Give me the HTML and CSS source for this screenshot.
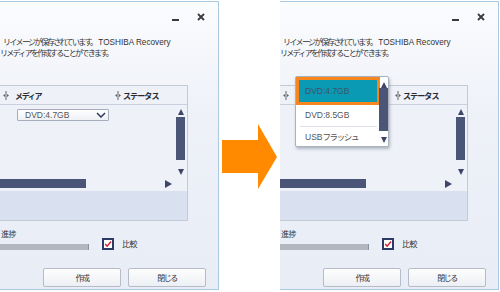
FILE: index.html
```html
<!DOCTYPE html>
<html lang="ja">
<head>
    <meta charset="UTF-8">
    <meta name="viewport" content="width=device-width, initial-scale=1.0">
    <title>リカバリメディア作成</title>
    <link rel="stylesheet" href="styles.css">
</head>
<body>
    <div class="stage">

        <!-- before: the media drop-down is closed -->
        <div class="shot">
            <div class="titlebar">
                <span class="min"></span>
                <svg class="close" width="8" height="8" viewBox="0 0 8 8"><path d="M1 1L7 7M7 1L1 7" stroke="#3a3a3a" stroke-width="1.8"/></svg>
            </div>
            <p class="intro">
                <span class="line first"><span class="ja">リイメージが保存されています。</span><span class="en">TOSHIBA Recovery</span></span>
                <span class="line"><span class="ja">リメディアを作成することができます。</span></span>
            </p>
            <div class="table">
                <div class="thead">
                    <div class="col col-media">
                        <svg class="sep" width="6" height="9" viewBox="0 0 6 9"><path d="M3 0V9" stroke="#666"/><path d="M0 4.5L2 3V6Z M6 4.5L4 3V6Z" fill="#666"/></svg>
                        <span class="head ja">メディア</span>
                    </div>
                    <div class="col">
                        <svg class="sep" width="6" height="9" viewBox="0 0 6 9"><path d="M3 0V9" stroke="#666"/><path d="M0 4.5L2 3V6Z M6 4.5L4 3V6Z" fill="#666"/></svg>
                        <span class="head ja status">ステータス</span>
                    </div>
                </div>
                <div class="tbody">
                    <div class="rows">
                        <div class="select">
                            <span>DVD:4.7GB</span>
                            <svg width="10" height="6" viewBox="0 0 10 6"><path d="M1 1L5 5L9 1" fill="none" stroke="#2f3b63" stroke-width="1.5"/></svg>
                        </div>
                    </div>
                    <div class="vscroll">
                        <span class="tri-up"></span>
                        <span class="thumb"></span>
                        <span class="tri-down"></span>
                    </div>
                </div>
                <div class="hscroll">
                    <span class="hthumb"></span>
                    <span class="tri-right"></span>
                </div>
                <div class="detail"></div>
            </div>
            <div class="progress">
                <div class="progress-col">
                    <div class="label ja">進捗</div>
                    <div class="bar"></div>
                </div>
                <span class="box"><svg width="10" height="10" viewBox="0 0 10 10"><path d="M1.5 5L4 7.8L8.8 1.8" fill="none" stroke="#d0202a" stroke-width="1.8"/></svg></span>
                <span class="check-label ja">比較</span>
            </div>
            <div class="actions">
                <button class="ja">作成</button>
                <button class="ja">閉じる</button>
            </div>
        </div>

        <div class="gap">
            <svg width="60" height="66" viewBox="0 0 60 66"><path d="M3 16H39V0L58 33L39 65V49H3Z" fill="#ff8a00"/></svg>
        </div>

        <!-- after: the list is open with the first entry picked -->
        <div class="shot shot-open">
            <div class="titlebar">
                <span class="min"></span>
                <svg class="close" width="8" height="8" viewBox="0 0 8 8"><path d="M1 1L7 7M7 1L1 7" stroke="#3a3a3a" stroke-width="1.8"/></svg>
            </div>
            <p class="intro">
                <span class="line first"><span class="ja">リイメージが保存されています。</span><span class="en">TOSHIBA Recovery</span></span>
                <span class="line"><span class="ja">リメディアを作成することができます。</span></span>
            </p>
            <div class="table">
                <div class="thead">
                    <div class="col col-media">
                        <svg class="sep" width="6" height="9" viewBox="0 0 6 9"><path d="M3 0V9" stroke="#666"/><path d="M0 4.5L2 3V6Z M6 4.5L4 3V6Z" fill="#666"/></svg>
                    </div>
                    <div class="col">
                        <svg class="sep" width="6" height="9" viewBox="0 0 6 9"><path d="M3 0V9" stroke="#666"/><path d="M0 4.5L2 3V6Z M6 4.5L4 3V6Z" fill="#666"/></svg>
                        <span class="head ja status">ステータス</span>
                    </div>
                </div>
                <div class="tbody">
                    <div class="rows"></div>
                    <div class="vscroll">
                        <span class="tri-up"></span>
                        <span class="thumb"></span>
                        <span class="tri-down"></span>
                    </div>
                </div>
                <div class="hscroll">
                    <span class="hthumb"></span>
                    <span class="tri-right"></span>
                </div>
                <div class="detail"></div>
            </div>
            <div class="progress">
                <div class="progress-col">
                    <div class="label ja">進捗</div>
                    <div class="bar"></div>
                </div>
                <span class="box"><svg width="10" height="10" viewBox="0 0 10 10"><path d="M1.5 5L4 7.8L8.8 1.8" fill="none" stroke="#d0202a" stroke-width="1.8"/></svg></span>
                <span class="check-label ja">比較</span>
            </div>
            <div class="actions">
                <button class="ja">作成</button>
                <button class="ja">閉じる</button>
            </div>

            <div class="popup">
                <ul class="options">
                    <li class="picked">DVD:4.7GB</li>
                    <li class="split">DVD:8.5GB</li>
                    <li>USB<span class="ja">フラッシュ</span></li>
                </ul>
                <div class="pscroll">
                    <span class="tri-up"></span>
                    <span class="pthumb"></span>
                    <span class="tri-down"></span>
                </div>
            </div>
        </div>

    </div>
</body>
</html>
```

FILE: styles.css
```css
body {
    margin: 0;
    background: white;
}

.stage {
    display: flex;
    align-items: flex-start;
    width: 500px;
    height: 292px;
    overflow: hidden;
}

/* one window crop */
.shot {
    position: relative;
    width: 219px;
    height: 289px;
    margin-top: 1px;
    box-sizing: border-box;
    border: 1px solid #a9cbe2;
    border-left: none;
    background: linear-gradient(#fbfcfe, #eef1f8 40%, #e9edf6);
    font-family: "Liberation Sans", "Noto Sans CJK JP", sans-serif;
    font-size: 8px;
    color: #333;
    overflow: hidden;
}

.ja {
    font-family: "Noto Sans CJK JP", sans-serif;
    letter-spacing: -1.5px;
}

.titlebar {
    height: 30px;
    display: flex;
    justify-content: flex-end;
    align-items: center;
    padding-right: 13px;
}

.min {
    width: 7px;
    height: 2px;
    background: #3a3a3a;
    margin-right: 18px;
    margin-top: 6px;
}

.close {
    display: block;
    margin-top: -1px;
}

.intro {
    margin: 0;
    padding-top: 5px;
    line-height: 10px;
}

.line {
    display: block;
    white-space: nowrap;
}

.line .ja {
    letter-spacing: -1.7px;
}

.first {
    margin-left: 3px;
}

.en {
    margin-left: 2px;
    font-size: 8.2px;
}

/* media list */
.table {
    margin-top: 26px;
    width: 188px;
    box-sizing: border-box;
    border: 1px solid #c3cad7;
    border-left: none;
    background: #eef1f8;
}

.thead {
    height: 19px;
    box-sizing: border-box;
    border-bottom: 1px solid #c9d0db;
    display: flex;
    align-items: center;
}

.col {
    display: flex;
    align-items: center;
}

.col-media {
    width: 112px;
    margin-left: 3px;
}

.sep {
    display: block;
}

.head {
    margin-left: 6px;
    font-weight: bold;
    color: #2a2a2a;
    letter-spacing: -1.3px;
}

.status {
    margin-left: 2px;
    letter-spacing: -0.9px;
}

.tbody {
    height: 74px;
    display: flex;
    justify-content: space-between;
}

.rows {
    padding-top: 4px;
    padding-left: 17px;
}

.select {
    width: 92px;
    height: 12px;
    box-sizing: border-box;
    border: 1px solid #a6aebb;
    border-radius: 1px;
    background: linear-gradient(#ffffff, #eef0f4);
    display: flex;
    align-items: center;
    justify-content: space-between;
    padding: 0 2px 0 7px;
    font-size: 8.5px;
    color: #555;
}

.select svg {
    display: block;
}

.vscroll {
    width: 9px;
    margin-right: 2px;
    padding-top: 4px;
    display: flex;
    flex-direction: column;
    align-items: center;
}

.tri-up {
    width: 0;
    height: 0;
    border-left: 3.5px solid transparent;
    border-right: 3.5px solid transparent;
    border-bottom: 6px solid #3d4669;
}

.tri-down {
    width: 0;
    height: 0;
    border-left: 3.5px solid transparent;
    border-right: 3.5px solid transparent;
    border-top: 6px solid #3d4669;
}

.tri-right {
    width: 0;
    height: 0;
    border-top: 4px solid transparent;
    border-bottom: 4px solid transparent;
    border-left: 7px solid #3d4669;
    margin-top: 1px;
}

.thumb {
    width: 9px;
    height: 43px;
    margin-top: 2px;
    background: #4b5577;
}

.vscroll .tri-down {
    margin-top: 9px;
}

.hscroll {
    height: 12px;
    display: flex;
    align-items: flex-start;
    justify-content: space-between;
    padding-right: 15px;
}

.hthumb {
    width: 86px;
    height: 9px;
    background: #4b5577;
}

.detail {
    height: 29px;
    background: #d9e0ef;
}

/* progress and compare */
.progress {
    margin-top: 8px;
    display: flex;
    align-items: flex-end;
}

.progress-col {
    width: 89px;
}

.label {
    line-height: 10px;
    margin-left: 1px;
    letter-spacing: -0.5px;
}

.bar {
    margin-top: 5px;
    height: 6px;
    box-sizing: border-box;
    background: #b3b7bf;
    border-right: 1px solid #8d939c;
}

.box {
    width: 12px;
    height: 12px;
    box-sizing: border-box;
    border: 2px solid #2b3b66;
    background: white;
    margin-left: 13px;
    display: flex;
    align-items: center;
    justify-content: center;
}

.box svg {
    display: block;
}

.check-label {
    margin-left: 8px;
    line-height: 12px;
    letter-spacing: -0.5px;
}

.actions {
    margin-top: 18px;
    display: flex;
    justify-content: flex-end;
    gap: 7px;
    padding-right: 12px;
}

button {
    width: 78px;
    height: 19px;
    padding: 0;
    border: 1px solid #b5bcc8;
    border-radius: 2px;
    background: linear-gradient(#fefefe, #eceff4);
    font-size: 8px;
    color: #333;
    letter-spacing: -0.5px;
}

/* opened drop-down list */
.popup {
    position: absolute;
    left: 15px;
    top: 74px;
    width: 94px;
    height: 71px;
    box-sizing: border-box;
    border: 1px solid #aab2be;
    border-radius: 2px;
    background: white;
    box-shadow: 1px 2px 3px rgba(60, 70, 90, 0.35);
    display: flex;
}

.options {
    list-style: none;
    margin: 0;
    padding: 0;
    width: 83px;
    font-size: 8.5px;
    color: #555;
}

.options li {
    height: 19px;
    line-height: 19px;
    padding-left: 9px;
}

.options .picked {
    height: 28px;
    line-height: 22px;
    box-sizing: border-box;
    width: 84px;
    border: 3px solid #f7861e;
    padding-left: 6px;
    background: #0a9ab4;
    color: #3c5665;
}

.options .split {
    height: 21px;
    line-height: 21px;
    border-bottom: 1px solid #dde1e8;
    margin: 0 2px 0 4px;
    padding-left: 5px;
}

.options .ja {
    letter-spacing: -1.4px;
}

.pscroll {
    width: 9px;
    padding-top: 5px;
    display: flex;
    flex-direction: column;
    align-items: center;
}

.pthumb {
    width: 9px;
    height: 43px;
    background: #4b5577;
}

.pscroll .tri-down {
    margin-top: 6px;
}

.gap {
    width: 61px;
    padding-top: 124px;
}

.gap svg {
    display: block;
}
```
